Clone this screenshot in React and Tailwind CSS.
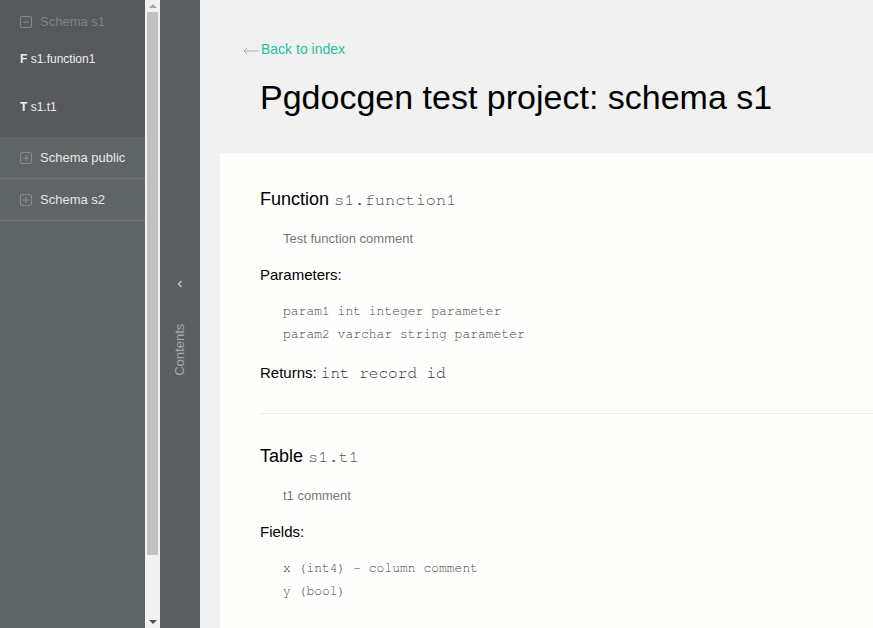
import React from 'react'

const sans = { fontFamily: '"Liberation Sans", Arial, sans-serif' }
const mono = { fontFamily: '"Nimbus Mono PS", "Nimbus Mono L", FreeMono, "Liberation Mono", "Courier New", monospace' }

function BoxIcon({ plus }) {
  return (
    <svg width="12" height="12" viewBox="0 0 12 12" className="shrink-0">
      <rect x="0.5" y="0.5" width="11" height="11" rx="1.5" fill="none" stroke="#878b8d" strokeWidth="1" />
      <line x1="3" y1="6" x2="9" y2="6" stroke="#878b8d" strokeWidth="1" />
      {plus && <line x1="6" y1="3" x2="6" y2="9" stroke="#878b8d" strokeWidth="1" />}
    </svg>
  )
}

function Sidebar() {
  const schemas = ['Schema public', 'Schema s2']
  return (
    <aside className="w-[145px] shrink-0 bg-[#5f6467] flex flex-col">
      <div className="bg-[#55595c] h-[137px] pl-5 pt-[14px]">
        <div className="flex items-center gap-2 h-4 text-[13px] text-[#7f8385]">
          <BoxIcon />
          <span>Schema s1</span>
        </div>
        <div className="mt-[20px] text-[12px] text-[#ededed]">
          <span className="font-bold">F</span> s1.function1
        </div>
        <div className="mt-[30px] text-[12px] text-[#ededed]">
          <span className="font-bold">T</span> s1.t1
        </div>
      </div>
      {schemas.map((name) => (
        <div key={name} className="h-[42px] flex items-center gap-2 pl-5 pt-[1px] border-b border-[#6f7376] text-[13px] text-[#e6e7e7]">
          <BoxIcon plus />
          <span>{name}</span>
        </div>
      ))}
    </aside>
  )
}

function Scrollbar() {
  return (
    <div className="w-[15px] shrink-0 bg-[#f1f2f0] flex flex-col items-center">
      <svg width="8" height="12" viewBox="0 0 8 12">
        <polygon points="0,8 4,4 8,8" fill="#a4a5a3" />
      </svg>
      <div className="w-[11px] h-[543px] bg-[#c1c2c0]" />
      <div className="flex-1" />
      <svg width="8" height="10" viewBox="0 0 8 10">
        <polygon points="0,2 8,2 4,6" fill="#505050" />
      </svg>
    </div>
  )
}

function ContentsPanel() {
  return (
    <div className="w-10 shrink-0 bg-[#5b5f62] flex flex-col items-center pt-[279px]">
      <svg width="6" height="10" viewBox="0 0 6 10">
        <polyline points="4.5,2 1.5,5 4.5,8" fill="none" stroke="#bfc3c3" strokeWidth="1.5" />
      </svg>
      <div className="mt-[31px] h-[60px] w-4 flex items-center justify-center">
        <span className="-rotate-90 whitespace-nowrap text-[13px] text-[#a6aaab]">Contents</span>
      </div>
    </div>
  )
}

function Section({ kind, name, comment, label, items, returns }) {
  return (
    <div>
      <h2 className="text-[18px] text-black leading-none">
        {kind} <span className="text-[17px] text-[#555]" style={mono}>{name}</span>
      </h2>
      <p className="mt-[21px] pl-[23px] text-[13px] text-[#777]">{comment}</p>
      <p className="mt-[15px] text-[15px] text-black">{label}</p>
      <div className="mt-[14px] pl-[23px] text-[13px] text-[#444] leading-[23px]" style={mono}>
        {items.map((it) => (
          <div key={it} className="whitespace-pre">{it}</div>
        ))}
      </div>
      {returns && (
        <p className="mt-[15px] text-[15px] text-black">
          Returns: <span className="text-[16px] text-[#333]" style={mono}>{returns}</span>
        </p>
      )}
    </div>
  )
}

export default function App() {
  return (
    <div className="w-[873px] h-[628px] flex overflow-hidden" style={sans}>
      <Sidebar />
      <Scrollbar />
      <ContentsPanel />
      <main className="flex-1 bg-[#f0f1f0] flex flex-col min-w-0">
        <header className="h-[153px] pl-[43px] pt-[39px]">
          <a className="flex items-center gap-[2px] text-[14px] text-[#1fbf9f]">
            <svg width="16" height="8" viewBox="0 0 16 8" className="mt-[2px]">
              <line x1="1" y1="4" x2="16" y2="4" stroke="#a9acab" strokeWidth="1" />
              <polyline points="4,1 1,4 4,7" fill="none" stroke="#a9acab" strokeWidth="1" />
            </svg>
            <span>Back to index</span>
          </a>
          <h1 className="mt-[20px] ml-[17px] text-[34px] text-black leading-none">
            Pgdocgen test project: schema s1
          </h1>
        </header>
        <div className="flex-1 ml-5 bg-[#fefefd] pl-10 pt-[37px]">
          <Section
            kind="Function"
            name="s1.function1"
            comment="Test function comment"
            label="Parameters:"
            items={['param1 int integer parameter', 'param2 varchar string parameter']}
            returns="int record id"
          />
          <div className="mt-[28px] border-t border-[#ececeb]" />
          <div className="mt-[33px]">
            <Section
              kind="Table"
              name="s1.t1"
              comment="t1 comment"
              label="Fields:"
              items={['x (int4) - column comment', 'y (bool)']}
            />
          </div>
        </div>
      </main>
    </div>
  )
}
